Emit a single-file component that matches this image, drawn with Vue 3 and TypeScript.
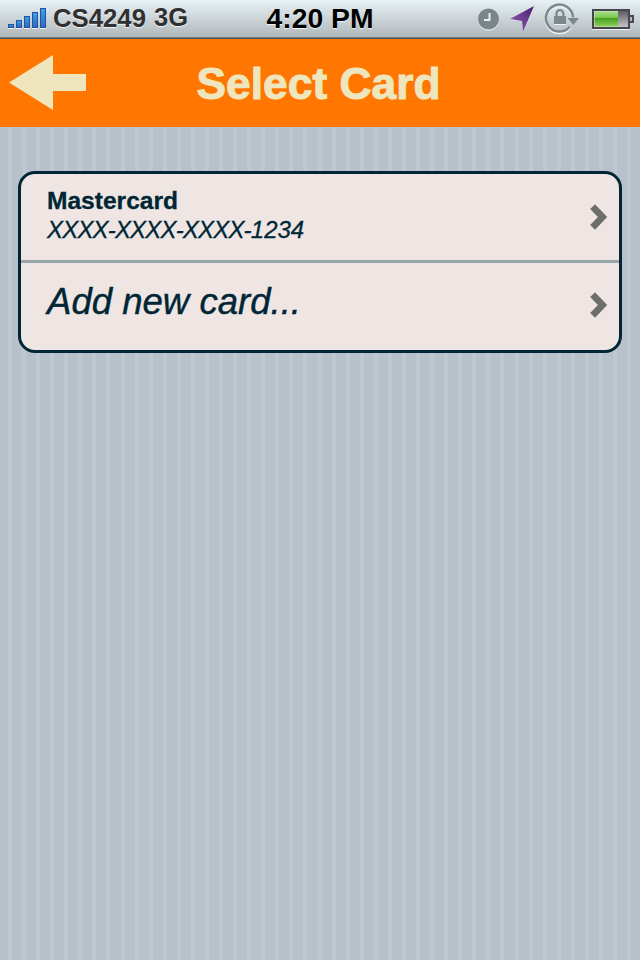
<script setup lang="ts">
interface Row {
  id: string
  title?: string
  masked?: string
  detail: string
}

const rows: Row[] = [
  { id: 'mastercard', title: 'Mastercard', masked: 'XXXX-XXXX-XXXX-', detail: '1234' },
  { id: 'new', detail: 'Add new card...' },
]

const bars: number[] = [4, 8, 12, 16, 20]
</script>

<template>
  <div class="screen">
    <header class="status">
      <div class="carrier">
        <svg class="signal" width="38" height="22" viewBox="0 0 38 22">
          <defs>
            <linearGradient id="bar" x1="0" y1="0" x2="0" y2="1">
              <stop offset="0" stop-color="#35a5e4" />
              <stop offset="1" stop-color="#2d69c0" />
            </linearGradient>
          </defs>
          <g v-for="(h, i) in bars" :key="h">
            <rect :x="i * 8" y="20" width="6" height="1" fill="#edf2f4" />
            <rect :x="i * 8 + 0.5" :y="20.5 - h" width="5" :height="h - 1" fill="url(#bar)" stroke="#2450a6" />
          </g>
        </svg>
        <svg class="carrier-text" width="150" height="38">
          <text class="label" x="1" y="27" textLength="93" lengthAdjust="spacingAndGlyphs">CS4249</text>
          <text class="label" x="102" y="26" textLength="34" lengthAdjust="spacingAndGlyphs">3G</text>
        </svg>
      </div>
      <svg class="clock" width="120" height="38">
        <text class="time" x="6.5" y="28" textLength="107" lengthAdjust="spacingAndGlyphs">4:20 PM</text>
      </svg>
      <svg class="indicators" width="170" height="38" viewBox="470 0 170 38">
        <defs>
          <linearGradient id="plane" x1="0" y1="1" x2="1" y2="0">
            <stop offset="0" stop-color="#9a62b4" />
            <stop offset="1" stop-color="#47206f" />
          </linearGradient>
          <linearGradient id="charge" x1="0" y1="0" x2="0" y2="1">
            <stop offset="0" stop-color="#a6dc86" />
            <stop offset="0.4" stop-color="#7ac850" />
            <stop offset="0.46" stop-color="#45a21c" />
            <stop offset="1" stop-color="#8fd05c" />
          </linearGradient>
          <linearGradient id="empty" x1="0" y1="0" x2="0" y2="1">
            <stop offset="0" stop-color="#5c5c60" />
            <stop offset="1" stop-color="#c5c5c7" />
          </linearGradient>
        </defs>
        <circle cx="488.5" cy="20" r="10.5" fill="#edf2f4" />
        <circle cx="488.5" cy="19" r="10.5" fill="#7b8688" />
        <path d="M489.5 13v7h-5.5" fill="none" stroke="#e9eff1" stroke-width="2" />
        <path d="M534 7l-24 13 12 1 1 12z" fill="#edf2f4" />
        <path d="M534 6l-24 13 12 2 1 11z" fill="url(#plane)" />
        <path d="M570.5 26.5A13.5 13.5 0 1 1 573 17.5" transform="translate(0 1)" fill="none" stroke="#edf2f4" stroke-width="2.5" />
        <path d="M569.8 26.8A13.5 13.5 0 1 1 573 17.5" fill="none" stroke="#7c888a" stroke-width="2.5" />
        <path d="M567.5 18H579l-5.7 7z" fill="#7c888a" />
        <path d="M554 16h12v9h-12z" fill="#edf2f4" />
        <path d="M554 16h12v8h-12z" fill="#7c888a" />
        <path d="M556.5 16v-2.5a3.4 3.4 0 0 1 6.8 0V16" fill="none" stroke="#7c888a" stroke-width="2.2" />
        <path d="M592 29.5h38" stroke="#edf2f4" stroke-width="1" />
        <rect x="593" y="10" width="36" height="18" fill="#dfe7d9" stroke="#464650" stroke-width="2" />
        <rect x="594.5" y="11.5" width="23.5" height="15" fill="url(#charge)" />
        <rect x="618" y="11" width="10" height="16" fill="url(#empty)" />
        <path d="M630 15h4v8h-4z" fill="#484850" />
        <path d="M630 17h2v4h-2z" fill="#b6b6bc" />
      </svg>
    </header>

    <nav class="bar">
      <button class="back" type="button" aria-label="Back">
        <svg width="77" height="56" viewBox="0 0 77 56">
          <path d="M0 27.5L44 0v19h33v17H44v19z" fill="#efe6be" />
        </svg>
      </button>
      <h1 class="heading">
        <svg width="260" height="60">
          <text class="title" x="6.5" y="44.5" textLength="244" lengthAdjust="spacingAndGlyphs">Select Card</text>
        </svg>
      </h1>
    </nav>

    <main class="content">
      <ul class="cards">
        <li v-for="row in rows" :key="row.id" class="row">
          <svg v-if="row.title" class="copy" width="300" height="86">
            <text class="name" x="0" y="35" textLength="131" lengthAdjust="spacingAndGlyphs">{{ row.title }}</text>
            <text class="number" x="0" y="64"><tspan class="masked">{{ row.masked }}</tspan><tspan>{{ row.detail }}</tspan></text>
          </svg>
          <svg v-else class="copy" width="300" height="84">
            <text class="add" x="0" y="51" textLength="254" lengthAdjust="spacingAndGlyphs">{{ row.detail }}</text>
          </svg>
          <svg class="chevron" width="18" height="26" viewBox="0 0 18 26">
            <path d="M2.6 2.6L12.5 13L2.6 23.4" fill="none" stroke="#6d6d6d" stroke-width="6.8" />
          </svg>
        </li>
      </ul>
    </main>
  </div>
</template>

<style>
body {
  margin: 0;
}
</style>

<style scoped>
.screen {
  width: 640px;
  height: 960px;
  overflow: hidden;
  display: flex;
  flex-direction: column;
  font-family: "Liberation Sans", Arial, sans-serif;
  background: repeating-linear-gradient(90deg, #b8c0ca 0 8px, #bfc8cf 8px 12px, #b8c0ca 12px 14.07px);
}
svg {
  display: block;
  overflow: visible;
}
.status {
  box-sizing: border-box;
  height: 39px;
  flex: none;
  display: grid;
  grid-template-columns: 260px 210px 170px;
  background: linear-gradient(#e7f0f4, #b0b8bc 37px, #8b9298 37px, #5a6068 38px, #4b555e 38px);
}
.carrier {
  display: flex;
}
.signal {
  margin: 8px 6px 0 8px;
}
.label {
  font-size: 26px;
  font-weight: bold;
  fill: #303030;
  text-shadow: 0 1px 1px #f0f4f5;
}
.time {
  font-size: 27px;
  font-weight: bold;
  fill: #000;
  text-shadow: 0 1px 1px #f0f4f5;
}
.bar {
  height: 88px;
  flex: none;
  display: grid;
  grid-template-columns: 190px 260px 190px;
  background: #ff7600;
}
.back {
  justify-self: start;
  align-self: start;
  margin: 16px 0 0 9px;
  padding: 0;
  border: 0;
  background: none;
}
.heading {
  margin: 15px 0 0;
}
.title {
  font-size: 45px;
  font-weight: bold;
  fill: #efe6be;
  stroke: #efe6be;
  stroke-width: 1px;
}
.content {
  padding: 44px 18px;
}
.cards {
  list-style: none;
  margin: 0;
  padding: 0;
  border: 3px solid #002635;
  border-radius: 17px;
  background: #efe6e4;
}
.row {
  height: 86px;
  padding: 0 11px 0 26px;
  display: flex;
  align-items: center;
  justify-content: space-between;
}
.row + .row {
  height: 84px;
  padding-bottom: 3px;
  border-top: 3px solid #98a6ab;
}
.name {
  font-size: 24px;
  font-weight: bold;
  fill: #002635;
  stroke: #002635;
  stroke-width: 0.3px;
}
.number {
  font-size: 24px;
  font-style: italic;
  fill: #002635;
  stroke: #002635;
  stroke-width: 0.3px;
}
.masked {
  letter-spacing: -0.82px;
}
.add {
  font-size: 36px;
  font-style: italic;
  fill: #002635;
  stroke: #002635;
  stroke-width: 0.4px;
}
</style>
